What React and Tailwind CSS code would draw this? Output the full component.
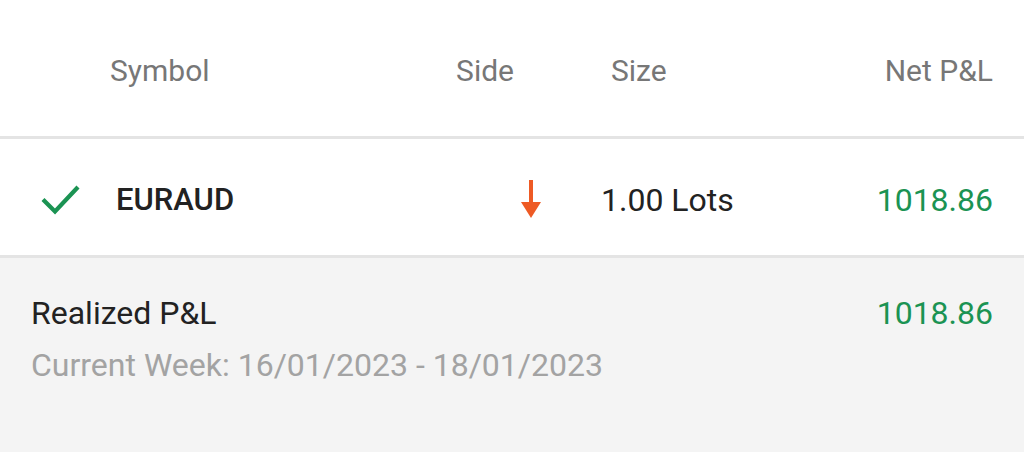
export default function App() {
  return (
    <div className="w-[1024px] h-[452px] bg-white flex flex-col" style={{ fontFamily: 'Roboto, "Liberation Sans", sans-serif' }}>
      <div className="h-[136px] flex items-center pl-[110px] pr-[31px] pt-[4px] text-[30px] text-[#777777]">
        <div className="w-[330px]">Symbol</div>
        <div className="w-[74px] text-right">Side</div>
        <div className="w-[97px]" />
        <div className="flex-1">Size</div>
        <div>Net P&amp;L</div>
      </div>
      <div className="h-[3px] bg-[#e4e4e4]" />
      <div className="h-[116px] flex items-center pl-[41px] pr-[31px] pt-[6px] text-[32px]">
        <div className="w-[75px] flex items-center">
          <svg width="40" height="32" viewBox="0 0 40 32" fill="none">
            <path d="M2 15.5 L14 27.5 L37 3" stroke="#1b9353" strokeWidth="4.2" />
          </svg>
        </div>
        <div className="w-[395px] font-medium text-[31px] text-[#222222]">EURAUD</div>
        <div className="w-[40px] flex justify-center">
          <svg width="22" height="40" viewBox="0 0 22 40">
            <rect x="9" y="0" width="4" height="24" fill="#ee5a24" />
            <path d="M1 22 L21 22 L11 38 Z" fill="#ee5a24" />
          </svg>
        </div>
        <div className="w-[50px]" />
        <div className="flex-1 text-[#222222]">1.00 Lots</div>
        <div className="text-[#1b9353]">1018.86</div>
      </div>
      <div className="h-[3px] bg-[#e4e4e4]" />
      <div className="flex-1 bg-[#f4f4f4] px-[31px] pt-[31px]">
        <div className="flex justify-between text-[32px]">
          <div className="text-[#222222]">Realized P&amp;L</div>
          <div className="text-[#1b9353]">1018.86</div>
        </div>
        <div className="mt-[4px] text-[32px] text-[#a3a3a3]">Current Week: 16/01/2023 - 18/01/2023</div>
      </div>
    </div>
  );
}
